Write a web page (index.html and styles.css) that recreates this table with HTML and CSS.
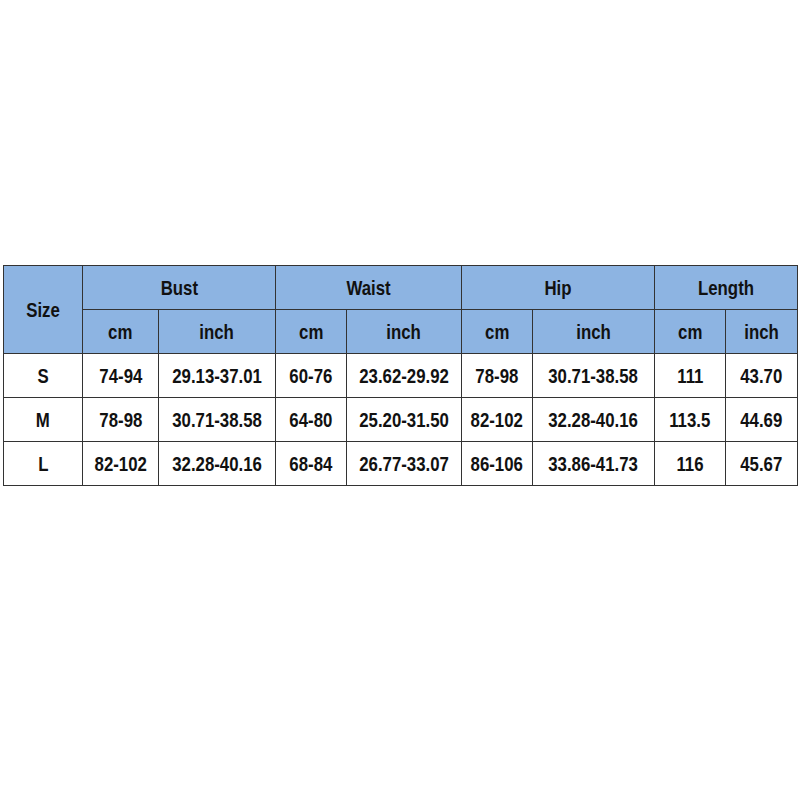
FILE: index.html
```html
<!DOCTYPE html>
<html>
<head>
<meta charset="utf-8">
<link rel="stylesheet" href="styles.css">
</head>
<body>
<div class="page">
<table class="size-table">
  <colgroup>
    <col class="c-size"><col class="c-bcm"><col class="c-binch"><col class="c-wcm"><col class="c-winch"><col class="c-hcm"><col class="c-hinch"><col class="c-lcm"><col class="c-linch">
  </colgroup>
  <thead>
    <tr>
      <th rowspan="2"><span>Size</span></th>
      <th colspan="2"><span>Bust</span></th>
      <th colspan="2"><span>Waist</span></th>
      <th colspan="2"><span>Hip</span></th>
      <th colspan="2"><span>Length</span></th>
    </tr>
    <tr>
      <th><span>cm</span></th><th><span>inch</span></th><th><span>cm</span></th><th><span>inch</span></th><th><span>cm</span></th><th><span>inch</span></th><th><span>cm</span></th><th><span>inch</span></th>
    </tr>
  </thead>
  <tbody>
    <tr><td><span>S</span></td><td><span>74-94</span></td><td><span>29.13-37.01</span></td><td><span>60-76</span></td><td><span>23.62-29.92</span></td><td><span>78-98</span></td><td><span>30.71-38.58</span></td><td><span>111</span></td><td><span>43.70</span></td></tr>
    <tr><td><span>M</span></td><td><span>78-98</span></td><td><span>30.71-38.58</span></td><td><span>64-80</span></td><td><span>25.20-31.50</span></td><td><span>82-102</span></td><td><span>32.28-40.16</span></td><td><span>113.5</span></td><td><span>44.69</span></td></tr>
    <tr><td><span>L</span></td><td><span>82-102</span></td><td><span>32.28-40.16</span></td><td><span>68-84</span></td><td><span>26.77-33.07</span></td><td><span>86-106</span></td><td><span>33.86-41.73</span></td><td><span>116</span></td><td><span>45.67</span></td></tr>
  </tbody>
</table>
</div>
</body>
</html>
```
FILE: styles.css
```css
html, body {
  margin: 0;
  padding: 0;
  background: #ffffff;
}
.page {
  padding: 265px 0 0 3px;
}
.size-table {
  border-collapse: collapse;
  table-layout: fixed;
  width: 794px;
  font-family: "Liberation Sans", Arial, sans-serif;
  font-weight: bold;
  font-size: 21px;
  color: #111111;
}
.c-size { width: 79px; }
.c-bcm { width: 76px; }
.c-binch { width: 117px; }
.c-wcm { width: 71px; }
.c-winch { width: 115px; }
.c-hcm { width: 71px; }
.c-hinch { width: 122px; }
.c-lcm { width: 71px; }
.c-linch { width: 72px; }
.size-table th,
.size-table td {
  border: 1px solid #333333;
  height: 43px;
  padding: 0;
  text-align: center;
  vertical-align: middle;
  white-space: nowrap;
}
.size-table th {
  background: #8db4e2;
  font-weight: bold;
}
.size-table span {
  display: inline-block;
  transform: scaleX(0.8);
  margin: 0 -30px;
}
```
